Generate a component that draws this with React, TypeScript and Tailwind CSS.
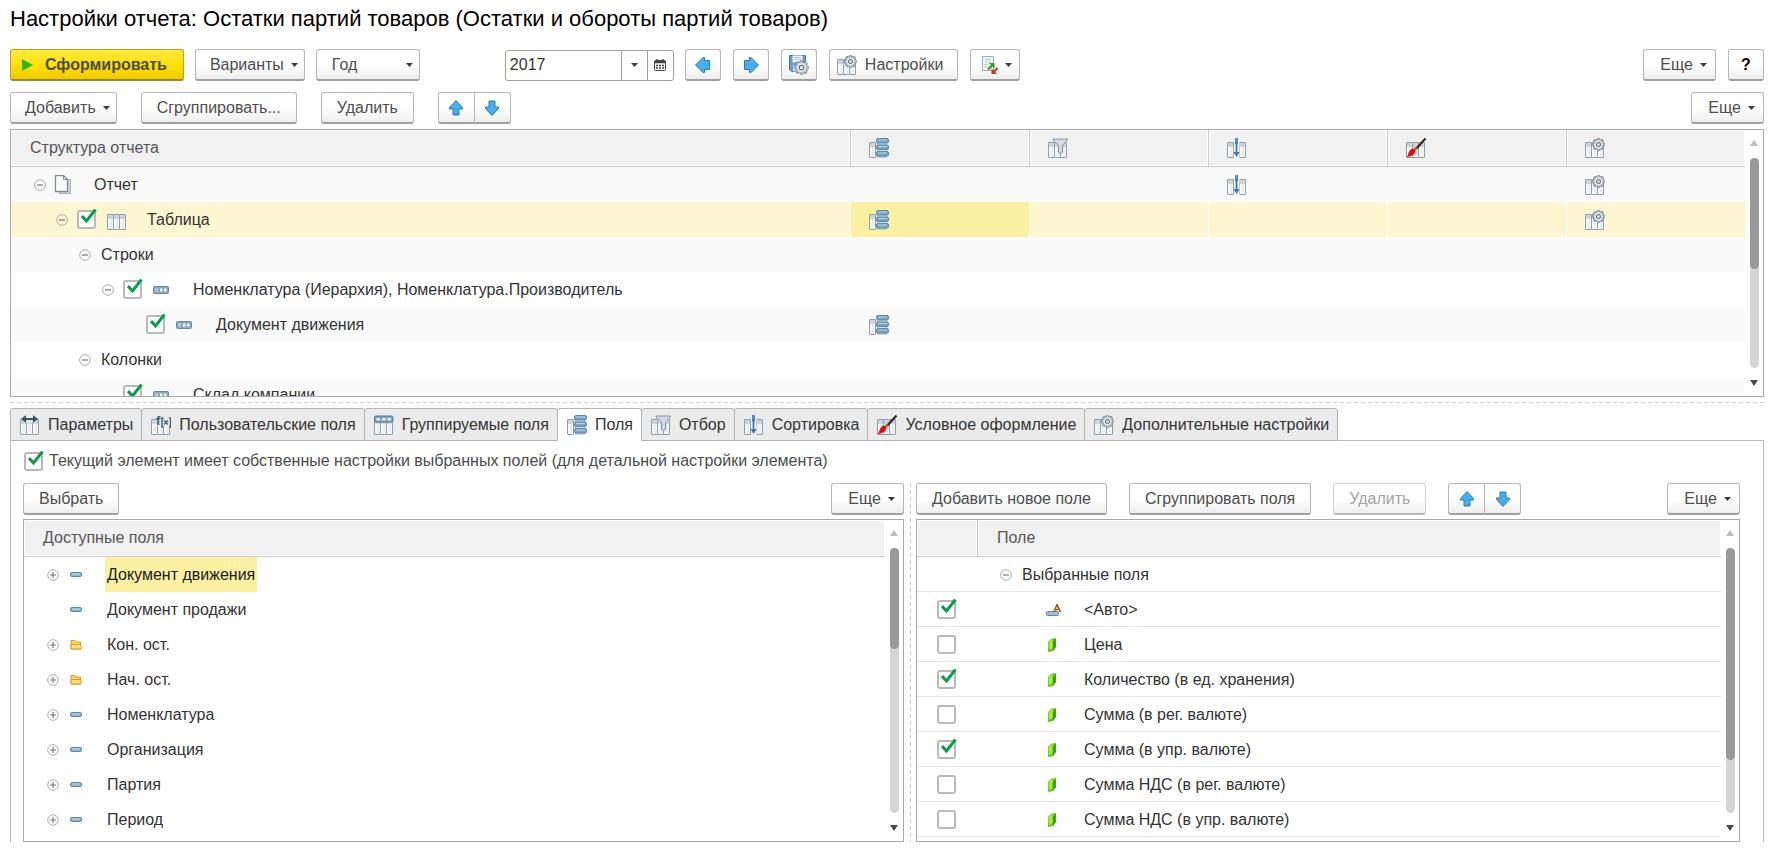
import { ReactNode, useState } from 'react'

type IconName =
    | 'columns'
    | 'params'
    | 'custom'
    | 'groups'
    | 'fields'
    | 'filter'
    | 'sort'
    | 'brush'
    | 'gear'

const gearTeeth = [0, 45, 90, 135, 180, 225, 270, 315]

function Gear({ x, y, r }: { x: number; y: number; r: number }) {
    return (
        <g transform={`translate(${x} ${y})`}>
            {gearTeeth.map(angle => (
                <circle
                    key={angle}
                    cy={-r}
                    r={r * 0.3}
                    fill="#dde2e6"
                    stroke="#7d8993"
                    strokeWidth="1"
                    transform={`rotate(${angle})`}
                />
            ))}
            <circle r={r} fill="#dfe4e8" stroke="#87929c" strokeWidth="0.8" />
            <circle r={r * 0.4} fill="#fff" stroke="#6f7b86" strokeWidth="1.3" />
        </g>
    )
}

function Column({ x, y = 4.5 }: { x: number; y?: number }) {
    return (
        <g>
            <rect x={x} y={y} width="6" height={19.5 - y} rx="0.5" fill="#f6f8fa" stroke="#8f9dab" />
            <rect x={x + 0.5} y={y + 0.5} width="5" height="2.5" fill="#cfd8e0" />
            <path d={`M${x} ${y + 3.5}h6`} stroke="#a9b5c0" />
            <path d={`M${x + 3.5} ${y + 5}V19`} stroke="#cdd5dc" strokeDasharray="2 1" />
        </g>
    )
}

function TableIcon({ name }: { name: IconName }) {
    return (
        <svg className="size-5 shrink-0" viewBox="0 0 20 20" fill="none" aria-hidden="true">
            {name === 'fields' ? (
                <>
                    <Column x={0.5} />
                    <rect x="8.5" y="2" width="9" height="17" fill="#dce5ec" stroke="#9fb2c1" />
                    {[0.5, 7, 13.5].map(y => (
                        <g key={y}>
                            <rect x="7.5" y={y} width="12" height="4.5" rx="1.5" fill="#7aa5c2" stroke="#5a87a6" />
                            <path d={`M9 ${y + 1.5}h9`} stroke="#b9d3e4" />
                        </g>
                    ))}
                </>
            ) : (
                <>
                    <Column x={0.5} />
                    <Column x={6.5} />
                    <Column x={12.5} />
                </>
            )}
            {name === 'params' && (
                <>
                    <path d="M4 0h12v8H4z" fill="#e9edf0" opacity="0.8" />
                    <path d="M1 4l5-4v3h7V0l5 4-5 4V5H6v3z" fill="#3c5162" />
                </>
            )}
            {name === 'custom' && (
                <>
                    <path d="M6 0h14v11H6z" fill="#ebebeb" />
                    <text x="5" y="10" fontSize="13" fontWeight="bold" fontFamily="Liberation Sans, sans-serif" fill="#39607c">
                        f
                    </text>
                    <path d="M12.500 3H11v9h1.500M18 3h1.500v9H18M13 5.500l4 4M17 5.500l-4 4" stroke="#39607c" strokeWidth="1.4" />
                </>
            )}
            {name === 'groups' && (
                <>
                    <rect x="0.5" y="1" width="18.500" height="6" rx="1.5" fill="#7ea3bf" stroke="#4f7490" />
                    <path d="M2.500 3h3.500v2.500H2.500zM8 3h3.500v2.500H8zM13.500 3H17v2.500h-3.500z" fill="#e6eff5" />
                </>
            )}
            {name === 'filter' && (
                <path
                    d="M5 1h14.500c0 3-5 5-5 7v6.500c0 1-4 1-4 0V8C10.500 6 5 4 5 1z"
                    fill="#d3dae1"
                    stroke="#8592a0"
                />
            )}
            {name === 'sort' && (
                <>
                    <path d="M7 4h5.500v16H7z" fill="#f6f6f6" />
                    <path d="M9.500 4v12" stroke="#3b76b0" strokeWidth="1.8" />
                    <path d="M6.500 14h6l-3 5z" fill="#3b76b0" />
                    <path d="M8 0l3 2-3 2 3 2M11 0L8 2l3 2-3 2" stroke="#3b76b0" />
                </>
            )}
            {name === 'brush' && (
                <>
                    <path d="M19.500 0.500L10 11" stroke="#3a2417" strokeWidth="2.2" />
                    <path d="M10.500 9.500l-2.500 2.700" stroke="#a0703c" strokeWidth="2.500" />
                    <path d="M8 11c2 1 1.500 4-.5 5.500S3 19 0.500 19C2.500 17.500 2 15 3.500 13S6.500 10.500 8 11z" fill="#fb0007" />
                </>
            )}
            {name === 'gear' && <Gear x={13.5} y={6.5} r={4.8} />}
        </svg>
    )
}

function PagesIcon() {
    return (
        <svg className="size-5 shrink-0" viewBox="0 0 20 20" fill="#fff" stroke="#7d8b99" aria-hidden="true">
            <path d="M5.500 4.500h11v14h-11z" fill="#cfd8e0" stroke="#a3afba" />
            <path d="M1.500 0.500h8l4 4v12h-12z" strokeWidth="1.3" />
            <path d="M9.500 0.500v4h4" fill="none" />
        </svg>
    )
}

function GroupIcon() {
    return (
        <svg className="h-2 w-4 shrink-0" viewBox="0 0 16 8" fill="none" aria-hidden="true">
            <rect x="0.5" y="0.5" width="15" height="7" rx="1" fill="#8ba7bc" stroke="#6a8aa4" />
            <path d="M2 3h3M2 5h3" stroke="#dce8f0" />
            <path d="M7 2.500h2.500v3H7zM11 2.500h2.500v3H11z" fill="#f2f8fc" />
        </svg>
    )
}

function FieldIcon() {
    return (
        <svg className="h-[5px] w-3 shrink-0" viewBox="0 0 12 5" aria-hidden="true">
            <rect x="0.5" y="0.5" width="11" height="4" rx="1.5" fill="#8fb4cc" stroke="#5b88a6" />
            <path d="M2 2h8" stroke="#bdd6e6" />
        </svg>
    )
}

function FolderIcon() {
    return (
        <svg className="h-[11px] w-3 shrink-0" viewBox="0 0 12 11" aria-hidden="true">
            <path d="M1 10V1.500h4l1 1.500h4.500v7z" fill="#fbd55c" stroke="#d39a35" strokeLinejoin="round" />
            <path d="M1 5.500h10v4.500H1z" fill="#ffe27c" stroke="#d39a35" strokeLinejoin="round" />
        </svg>
    )
}

function AutoIcon() {
    return (
        <svg className="h-3 w-4 shrink-0" viewBox="0 0 16 12" aria-hidden="true">
            <rect x="0.5" y="7.500" width="12" height="4" rx="1" fill="#9cbfdb" stroke="#5e89aa" />
            <path d="M8 8l3-7.500L14.500 8M9 5.500h4.500" stroke="#95632c" strokeWidth="1.7" fill="none" />
        </svg>
    )
}

function ResourceIcon() {
    return (
        <svg className="h-4 w-2 shrink-0" viewBox="0 0 8 16" aria-hidden="true">
            <path d="M0 5L3 2l4-1q1 0 1 1v8l-3 4-4 1q-1 0-1-1z" fill="#62c91f" />
            <path d="M0.500 5.500L3 3l2.500-.5L4.500 5v6L1 13z" fill="#a6ea3c" />
            <path d="M5 5l2.700-3.500V10L5 14z" fill="#349a10" />
        </svg>
    )
}

function BlueArrow({ turn, wide }: { turn: string; wide?: boolean }) {
    return (
        <svg className={`size-4 ${turn}`} viewBox="0 0 16 16" aria-hidden="true">
            <path
                d={wide ? 'M8 0.500L15.500 8v1.500H12.500v5h-9v-5H0.500V8z' : 'M8 0.500l6.500 7V9H11v6H5V9H1.500V7.500z'}
                fill="#45aeeb"
                stroke="#2b7cb0"
                strokeLinejoin="round"
            />
        </svg>
    )
}

function Caret() {
    return (
        <svg className="h-1 w-[7px] shrink-0" viewBox="0 0 7 4" aria-hidden="true">
            <path d="M0 0h7L3.500 4z" fill="#3c3c3c" />
        </svg>
    )
}

function Toggle({ open }: { open: boolean }) {
    return (
        <button type="button" className="size-3 shrink-0" aria-label={open ? 'Свернуть' : 'Развернуть'}>
            <svg className="size-3" viewBox="0 0 12 12" fill="none" aria-hidden="true">
                <circle cx="6" cy="6" r="5.300" stroke="#adadad" />
                <path d={open ? 'M3 6h6' : 'M3 6h6M6 3v6'} stroke="#777" strokeWidth="1.2" />
            </svg>
        </button>
    )
}

const buttonBase =
    'flex h-8 shrink-0 items-center justify-center rounded-[3px] border border-b-2 border-[#b8b8b8] border-b-[#a0a0a0] bg-linear-to-b from-white from-50% to-[#eeeeee] text-[#4d4d4d]'

function Button({ children, menu, disabled }: { children: ReactNode; menu?: boolean; disabled?: boolean }) {
    return (
        <button
            type="button"
            disabled={disabled}
            className={`${buttonBase} ${menu ? 'min-w-[73px] gap-[7px] pl-[14px] pr-[6px]' : 'px-[15px]'} disabled:border-[#d4d4d4] disabled:border-b-[#bcbcbc] disabled:text-[#a3a3a3]`}
        >
            {children}
            {menu && <Caret />}
        </button>
    )
}

function IconButton({ label, children }: { label: string; children: ReactNode }) {
    return (
        <button type="button" aria-label={label} className={`${buttonBase} w-9`}>
            {children}
        </button>
    )
}

function MoveButtons() {
    return (
        <div className="flex">
            <button type="button" aria-label="Переместить вверх" className={`${buttonBase} w-[37px] rounded-r-none`}>
                <BlueArrow turn="rotate-0" />
            </button>
            <button type="button" aria-label="Переместить вниз" className={`${buttonBase} -ml-px w-[37px] rounded-l-none`}>
                <BlueArrow turn="rotate-180" />
            </button>
        </div>
    )
}

function CheckBox({ id, label, checked }: { id?: string; label?: string; checked?: boolean }) {
    return (
        <span className="relative block size-[19px] shrink-0">
            <input
                id={id}
                type="checkbox"
                aria-label={label}
                defaultChecked={checked}
                className="peer block size-[19px] appearance-none rounded-[3px] border-2 border-[#b9b9b9] bg-white"
            />
            <svg
                className="pointer-events-none absolute -top-px left-1 hidden h-4 w-4 peer-checked:block"
                viewBox="0 0 16 16"
                fill="none"
                aria-hidden="true"
            >
                <path d="M1 7l4.500 5L14.500 0.500" stroke="#0a9a4a" strokeWidth="3" />
            </svg>
        </span>
    )
}

function ScrollBar({ thumb }: { thumb: string }) {
    return (
        <div className="flex w-[18px] shrink-0 flex-col items-center bg-white pt-[10px] pb-[10px]">
            <svg className="h-[6px] w-2 shrink-0" viewBox="0 0 8 6" aria-hidden="true">
                <path d="M0 6L4 0l4 6z" fill="#bdbdbd" />
            </svg>
            <div className="mt-3 mb-3 w-[9px] grow rounded-full bg-[#d5d5d5]">
                <div className={`w-full rounded-full bg-[#999] ${thumb}`} />
            </div>
            <svg className="h-[6px] w-2 shrink-0" viewBox="0 0 8 6" aria-hidden="true">
                <path d="M0 0h8L4 6z" fill="#4a4a4a" />
            </svg>
        </div>
    )
}

const headCell =
    'h-[37px] border-b border-[#cbcbcb] bg-[#f1f1f1] p-0 text-left font-normal text-[#555] shadow-[inset_0_0_0_1px_white]'

interface StructureRow {
    title: string
    indent: string
    icon?: ReactNode
    gap: string
    toggle?: boolean
    check?: boolean
    marks?: IconName[]
    selected?: boolean
}

const structure: StructureRow[] = [
    { title: 'Отчет', indent: 'pl-[23px]', icon: <PagesIcon />, gap: 'ml-5', toggle: true, marks: ['sort', 'gear'] },
    {
        title: 'Таблица',
        indent: 'pl-[45px]',
        icon: <TableIcon name="columns" />,
        gap: 'ml-5',
        toggle: true,
        check: true,
        marks: ['fields', 'gear'],
        selected: true,
    },
    { title: 'Строки', indent: 'pl-[68px]', gap: 'ml-[10px]', toggle: true },
    {
        title: 'Номенклатура (Иерархия), Номенклатура.Производитель',
        indent: 'pl-[91px]',
        icon: <GroupIcon />,
        gap: 'ml-6',
        toggle: true,
        check: true,
    },
    {
        title: 'Документ движения',
        indent: 'pl-[126px]',
        icon: <GroupIcon />,
        gap: 'ml-6',
        check: true,
        marks: ['fields'],
    },
    { title: 'Колонки', indent: 'pl-[68px]', gap: 'ml-[10px]', toggle: true },
    { title: 'Склад компании', indent: 'pl-[103px]', icon: <GroupIcon />, gap: 'ml-6', check: true },
]

const settingColumns: { name: IconName; label: string }[] = [
    { name: 'fields', label: 'Поля' },
    { name: 'filter', label: 'Отбор' },
    { name: 'sort', label: 'Сортировка' },
    { name: 'brush', label: 'Условное оформление' },
    { name: 'gear', label: 'Дополнительные настройки' },
]

function StructureTable() {
    return (
        <div className="mt-[5px] flex h-[268px] overflow-hidden border border-[#a9a9a9]">
            <div className="min-w-0 grow overflow-hidden">
                <table className="w-full table-fixed border-separate border-spacing-0">
                    <colgroup>
                        <col />
                        {settingColumns.map(column => (
                            <col key={column.name} className="w-[179px]" />
                        ))}
                    </colgroup>
                    <thead>
                        <tr>
                            <th className={`${headCell} pl-[19px]`}>Структура отчета</th>
                            {settingColumns.map(column => (
                                <th key={column.name} aria-label={column.label} className={`${headCell} border-l pl-[18px]`}>
                                    <TableIcon name={column.name} />
                                </th>
                            ))}
                        </tr>
                    </thead>
                    <tbody>
                        {structure.map(row => (
                            <tr key={row.title} className={row.selected ? 'bg-[#fdf6d0]' : 'odd:bg-[#fafafa]'}>
                                <td className="h-[35px] p-0">
                                    <div className={`flex items-center ${row.indent}`}>
                                        {row.toggle && <Toggle open />}
                                        {row.check && (
                                            <span className="ml-[9px]">
                                                <CheckBox label={row.title} checked />
                                            </span>
                                        )}
                                        {row.icon && (
                                            <span className={row.check ? 'ml-[11px]' : 'ml-2'}>{row.icon}</span>
                                        )}
                                        <span className={`${row.gap} whitespace-nowrap`}>{row.title}</span>
                                    </div>
                                </td>
                                {settingColumns.map(column => (
                                    <td
                                        key={column.name}
                                        className={`p-0 pl-[18px] ${row.selected ? 'border-l border-white' : 'border-l border-transparent'} ${row.selected && column.name === 'fields' ? 'bg-[#fcf0a2]' : ''}`}
                                    >
                                        {row.marks?.includes(column.name) && <TableIcon name={column.name} />}
                                    </td>
                                ))}
                            </tr>
                        ))}
                    </tbody>
                </table>
            </div>
            <ScrollBar thumb="h-[53%]" />
        </div>
    )
}

const tabs: { icon: IconName; label: string }[] = [
    { icon: 'params', label: 'Параметры' },
    { icon: 'custom', label: 'Пользовательские поля' },
    { icon: 'groups', label: 'Группируемые поля' },
    ...settingColumns.map(column => ({ icon: column.name, label: column.label })),
]

const availableFields = [
    { title: 'Документ движения', expandable: true, selected: true },
    { title: 'Документ продажи' },
    { title: 'Кон. ост.', expandable: true, folder: true },
    { title: 'Нач. ост.', expandable: true, folder: true },
    { title: 'Номенклатура', expandable: true },
    { title: 'Организация', expandable: true },
    { title: 'Партия', expandable: true },
    { title: 'Период', expandable: true },
]

function AvailableFields() {
    return (
        <section className="min-w-0">
            <div className="flex justify-between">
                <Button>Выбрать</Button>
                <Button menu>Еще</Button>
            </div>
            <div className="mt-1 flex h-[323px] overflow-hidden border border-[#a9a9a9]">
                <table className="w-full border-separate border-spacing-0 self-start">
                    <thead>
                        <tr>
                            <th className={`${headCell} pl-[19px]`}>Доступные поля</th>
                        </tr>
                    </thead>
                    <tbody>
                        {availableFields.map(field => (
                            <tr key={field.title}>
                                <td className="h-[35px] p-0">
                                    <div className="flex h-[35px] items-center pl-[23px]">
                                        <span className="flex w-[23px]">{field.expandable && <Toggle open={false} />}</span>
                                        {field.folder ? <FolderIcon /> : <FieldIcon />}
                                        <span
                                            className={`ml-[23px] flex h-full items-center px-[2px] pt-px ${field.selected ? 'bg-[#fcf0a2] text-[#1a1a1a]' : ''}`}
                                        >
                                            {field.title}
                                        </span>
                                    </div>
                                </td>
                            </tr>
                        ))}
                    </tbody>
                </table>
                <ScrollBar thumb="h-[38%]" />
            </div>
        </section>
    )
}

const chosenFields = [
    { title: '<Авто>', checked: true, auto: true },
    { title: 'Цена', checked: false },
    { title: 'Количество (в ед. хранения)', checked: true },
    { title: 'Сумма (в рег. валюте)', checked: false },
    { title: 'Сумма (в упр. валюте)', checked: true },
    { title: 'Сумма НДС (в рег. валюте)', checked: false },
    { title: 'Сумма НДС (в упр. валюте)', checked: false },
]

const lineCell = 'h-[35px] border-b border-[#e6e6e6] p-0'

function ChosenFields() {
    return (
        <section className="min-w-0">
            <div className="flex gap-[22px]">
                <Button>Добавить новое поле</Button>
                <Button>Сгруппировать поля</Button>
                <Button disabled>Удалить</Button>
                <MoveButtons />
                <div className="ml-auto">
                    <Button menu>Еще</Button>
                </div>
            </div>
            <div className="mt-1 flex h-[323px] overflow-hidden border border-[#a9a9a9]">
                <table className="w-full table-fixed border-separate border-spacing-0 self-start">
                    <colgroup>
                        <col className="w-[60px]" />
                        <col />
                    </colgroup>
                    <thead>
                        <tr>
                            <th className={headCell} aria-label="Использование" />
                            <th className={`${headCell} border-l pl-[19px]`}>Поле</th>
                        </tr>
                    </thead>
                    <tbody>
                        <tr>
                            <td className={lineCell} />
                            <td className={lineCell}>
                                <div className="flex items-center gap-[10px] pt-px pl-[23px]">
                                    <Toggle open />
                                    Выбранные поля
                                </div>
                            </td>
                        </tr>
                        {chosenFields.map(field => (
                            <tr key={field.title}>
                                <td className={lineCell}>
                                    <div className="pl-5">
                                        <CheckBox label={field.title} checked={field.checked} />
                                    </div>
                                </td>
                                <td className={lineCell}>
                                    <div className="flex items-center pt-px pl-[69px]">
                                        <span className="flex w-[38px]">
                                            {field.auto ? (
                                                <AutoIcon />
                                            ) : (
                                                <span className="ml-[2px]">
                                                    <ResourceIcon />
                                                </span>
                                            )}
                                        </span>
                                        {field.title}
                                    </div>
                                </td>
                            </tr>
                        ))}
                    </tbody>
                </table>
                <ScrollBar thumb="h-[80%]" />
            </div>
        </section>
    )
}

export default function App() {
    const [activeTab, setActiveTab] = useState('Поля')

    return (
        <main className="overflow-hidden bg-white pt-[5px] pr-4 pl-[10px] font-['Liberation_Sans',Arial,sans-serif] text-[16px] leading-5 text-[#333]">
            <h1 className="text-[22px] leading-7 text-black">
                Настройки отчета: Остатки партий товаров (Остатки и обороты партий товаров)
            </h1>

            <div className="mt-4 flex items-center gap-[11px]">
                <button
                    type="button"
                    className="flex h-8 items-center gap-3 rounded-[3px] border border-b-2 border-[#bba31c] border-b-[#9c8a25] bg-linear-to-b from-[#ffe93a] via-[#ffe100] to-[#efca00] pr-4 pl-[11px] font-bold text-[#4d4d4d]"
                >
                    <svg className="h-3 w-[11px]" viewBox="0 0 11 12" aria-hidden="true">
                        <path d="M0 0l11 6-11 6z" fill="#2fb413" />
                    </svg>
                    Сформировать
                </button>
                <Button menu>Варианты</Button>
                <div className="relative">
                    <select aria-label="Период" className={`${buttonBase} w-[104px] appearance-none pl-[15px]`}>
                        <option>Год</option>
                    </select>
                    <span className="pointer-events-none absolute top-[14px] right-[7px] flex">
                        <Caret />
                    </span>
                </div>
                <div className="ml-[74px] flex h-[31px] w-[169px] overflow-hidden rounded-[3px] border border-[#a0a0a0]">
                    <input aria-label="Год отчета" defaultValue="2017" className="min-w-0 grow pl-1 outline-none" />
                    <button
                        type="button"
                        aria-label="Выбрать из списка"
                        className="flex w-[26px] shrink-0 items-center justify-center border-l border-[#a0a0a0]"
                    >
                        <Caret />
                    </button>
                    <button
                        type="button"
                        aria-label="Календарь"
                        className="flex w-[26px] shrink-0 items-center justify-center border-l border-[#a0a0a0]"
                    >
                        <svg className="size-3" viewBox="0 0 12 12" fill="none" stroke="#444" aria-hidden="true">
                            <rect x="0.5" y="1.500" width="11" height="10" rx="1" />
                            <path d="M0.500 3h11" strokeWidth="2.500" />
                            <path d="M3 0v2M9 0v2" strokeWidth="1.500" />
                            <path d="M2 6.500h8M2 9h8" strokeWidth="1.500" strokeDasharray="2 1" />
                        </svg>
                    </button>
                </div>
                <div className="flex items-center gap-3">
                    <IconButton label="Предыдущий период">
                        <BlueArrow turn="-rotate-90" wide />
                    </IconButton>
                    <IconButton label="Следующий период">
                        <BlueArrow turn="rotate-90" wide />
                    </IconButton>
                    <IconButton label="Сохранить настройки">
                        <svg className="size-5" viewBox="0 0 20 20" aria-hidden="true">
                            <path d="M0.500 0.500h16v16h-14l-2-2z" fill="#6d9ecb" stroke="#47749e" />
                            <path d="M3.500 0.500h10v7h-10z" fill="#f2f6fa" />
                            <path d="M5 2.500h7M5 4.500h7" stroke="#b7c6d4" />
                            <path d="M4 10.500h6v6H4z" fill="#d6e1eb" />
                            <Gear x={12.5} y={12.5} r={5.5} />
                        </svg>
                    </IconButton>
                    <button type="button" className={`${buttonBase} gap-2 pr-[14px] pl-[7px]`}>
                        <TableIcon name="gear" />
                        Настройки
                    </button>
                    <button type="button" aria-label="Вывод отчета" className={`${buttonBase} gap-[7px] pr-[7px] pl-[11px]`}>
                        <svg className="h-5 w-4" viewBox="0 0 16 20" fill="none" aria-hidden="true">
                            <path d="M0.500 1.500h11v14h-11z" fill="#eef6f6" stroke="#9ab0bd" />
                            <path d="M3 4.500h6M3 7h6M3 9.500h3M3 12h3" stroke="#b9c9d2" />
                            <path d="M6 14.500l4.500-4.500" stroke="#3c9a1b" strokeWidth="2.200" />
                            <path d="M7 8h5.500v5.500z" fill="#3c9a1b" />
                            <path d="M15.500 13l-3.500 3.500" stroke="#c9301f" strokeWidth="2.200" />
                            <path d="M9.500 13.500V19H15z" fill="#c9301f" />
                        </svg>
                        <Caret />
                    </button>
                </div>
                <div className="ml-auto flex gap-3">
                    <Button menu>Еще</Button>
                    <button type="button" aria-label="Справка" className={`${buttonBase} w-9 font-bold text-black`}>
                        ?
                    </button>
                </div>
            </div>

            <div className="mt-[11px] flex gap-6">
                <Button menu>Добавить</Button>
                <Button>Сгруппировать...</Button>
                <Button>Удалить</Button>
                <MoveButtons />
                <div className="ml-auto">
                    <Button menu>Еще</Button>
                </div>
            </div>

            <StructureTable />

            <div className="my-[5px] h-px bg-[repeating-linear-gradient(90deg,#cfcfcf_0_4px,transparent_4px_7px)]" />

            <div role="tablist" className="flex">
                {tabs.map(tab => (
                    <button
                        key={tab.label}
                        type="button"
                        role="tab"
                        aria-selected={tab.label === activeTab}
                        onClick={() => setActiveTab(tab.label)}
                        className={`z-10 -mr-px -mb-px flex h-[33px] items-center gap-2 rounded-t-[3px] border border-[#b4b4b4] pr-2 pl-[9px] whitespace-nowrap ${tab.label === activeTab ? 'border-b-white bg-white' : 'bg-[#ebebeb]'}`}
                    >
                        <TableIcon name={tab.icon} />
                        {tab.label}
                    </button>
                ))}
            </div>

            <div role="tabpanel" className="border border-b-0 border-[#bdbdbd] pt-[10px] pr-[23px] pl-3">
                <div className="flex items-center gap-[6px] pl-[1px] text-[#4d4d4d]">
                    <CheckBox id="own-settings" checked />
                    <label htmlFor="own-settings">
                        Текущий элемент имеет собственные настройки выбранных полей (для детальной настройки элемента)
                    </label>
                </div>
                <div className="mt-3 grid grid-cols-[881fr_12px_824fr]">
                    <AvailableFields />
                    <div className="mx-auto w-px bg-[repeating-linear-gradient(180deg,#cfcfcf_0_4px,transparent_4px_7px)]" />
                    <ChosenFields />
                </div>
            </div>
        </main>
    )
}
